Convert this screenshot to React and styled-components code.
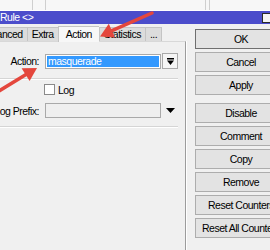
import React from 'react';
import styled, { createGlobalStyle } from 'styled-components';

const uiFont = '"Liberation Sans", Arial, sans-serif';

const GlobalStyle = createGlobalStyle`
  html, body { margin: 0; padding: 0; background: #f0f0f0; }
  body { font-family: ${uiFont}; font-size: 10.5px; letter-spacing: -0.5px; color: #000; }
`;

const Frame = styled.div`
  position: relative;
  width: 270px;
  height: 250px;
  overflow: hidden;
  display: flex;
  flex-direction: column;
  background: #f0f0f0;
`;

// the list window behind the dialog
const HeaderStrip = styled.div`
  display: flex;
  height: 10px;
  background: #f7f7f7;
  border-bottom: 1px solid #fff;
  flex-shrink: 0;
`;
const HeaderCell = styled.div`
  width: ${p => p.w}px;
  flex-shrink: 0;
  border-right: 1px solid #cfcfcf;
`;

const TitleBar = styled.div`
  display: flex;
  align-items: center;
  justify-content: space-between;
  height: 13px;
  background: #4b4dcb;
  color: #fff;
  line-height: 13px;
  flex-shrink: 0;
`;
const MaxBox = styled.div`
  width: 10px;
  height: 8px;
  margin-right: -4px;
  border: 1px solid #2a2a2a;
  background: #f4f4f4;
`;

const Body = styled.div`
  display: flex;
  align-items: stretch;
  flex: 1;
`;

const LeftPane = styled.div`
  width: 186px;
  flex-shrink: 0;
  display: flex;
  flex-direction: column;
  padding-top: 2px;
`;

const TabRow = styled.div`
  display: flex;
  align-items: flex-end;
  height: 15px;
`;
const Tab = styled.div`
  height: ${p => (p.active ? 15 : 13)}px;
  line-height: ${p => (p.active ? 15 : 13)}px;
  padding: 0 ${p => (p.active ? 7 : 4)}px;
  margin-left: ${p => p.offset || 0}px;
  margin-bottom: ${p => (p.active ? -1 : 0)}px;
  background: ${p => (p.active ? '#f7f7f7' : '#dcdcdc')};
  border: 1px solid #c4c4c4;
  border-bottom: none;
  border-right: none;
  white-space: nowrap;
  position: relative;
  z-index: ${p => (p.active ? 1 : 0)};
  &:last-child { border-right: 1px solid #c4c4c4; }
`;

const Panel = styled.div`
  flex: 1;
  display: flex;
  flex-direction: column;
  padding: 11px 7px 0 0;
  border-top: 1px solid #d8d8d8;
  border-right: 1px solid #9c9c9c;
  box-shadow: 1px 0 0 #fff;
`;

const FieldRow = styled.div`
  display: flex;
  align-items: center;
  gap: 6px;
  height: ${p => p.h}px;
  margin-top: ${p => p.top || 0}px;
`;
const Label = styled.div`
  width: 39px;
  flex-shrink: 0;
  display: flex;
  justify-content: flex-end;
  white-space: nowrap;
`;

const SelectBox = styled.div`
  width: 116px;
  height: 15px;
  box-sizing: border-box;
  border: 1px solid #a9a9a9;
  background: ${p => (p.disabled ? '#efefef' : '#fff')};
  display: flex;
  align-items: center;
  padding: 0 1px;
`;
const Selected = styled.span`
  flex: 1;
  height: 11px;
  line-height: 11px;
  background: #3399ff;
  color: #fff;
  padding-left: 1px;
`;
const DropButton = styled.div`
  width: 16px;
  height: 16px;
  box-sizing: border-box;
  margin-left: -5px;
  border: 1px solid #a9a9a9;
  background: #f5f5f5;
  display: flex;
  align-items: center;
  justify-content: center;
`;
const DropArrow = styled.div`
  margin-left: -1px;
  display: flex;
  align-items: center;
`;

const CheckBox = styled.div`
  width: 11px;
  height: 11px;
  box-sizing: border-box;
  border: 1px solid #8a8a8a;
  background: #fff;
  margin-left: -1px;
`;
const CheckLabel = styled.span`
  margin-left: -3px;
`;

const Separator = styled.div`
  height: 0;
  border-top: 1px solid #d5d5d5;
  border-bottom: 1px solid #fff;
  margin-top: ${p => p.top}px;
`;

const ButtonColumn = styled.div`
  margin-left: 9px;
  width: 92px;
  flex-shrink: 0;
  display: flex;
  flex-direction: column;
  gap: 3px;
  padding-top: 5px;
`;
const Button = styled.div`
  height: 20px;
  box-sizing: border-box;
  border: 1px solid ${p => (p.primary ? '#6f6f6f' : '#adadad')};
  background: #e3e3e3;
  display: flex;
  align-items: center;
  justify-content: center;
  white-space: nowrap;
  margin-top: ${p => (p.spaced ? 5 : 0)}px;
`;

const Overlay = styled.svg`
  position: absolute;
  left: 0;
  top: 0;
  pointer-events: none;
`;

const StackedArrow = () => (
  <svg width="9" height="9" viewBox="0 0 9 9">
    <rect x="1" y="1" width="7" height="1.5" fill="#000" />
    <path d="M1 3.5 H8 L4.5 8 Z" fill="#000" />
  </svg>
);

const TriangleDown = () => (
  <svg width="9" height="5" viewBox="0 0 9 5">
    <path d="M0 0 H9 L4.5 5 Z" fill="#000" />
  </svg>
);

const buttons = [
  { label: 'OK', primary: true },
  { label: 'Cancel' },
  { label: 'Apply' },
  { label: 'Disable', spaced: true },
  { label: 'Comment' },
  { label: 'Copy' },
  { label: 'Remove' },
  { label: 'Reset Counters' },
  { label: 'Reset All Counters' },
];

const App = () => (
  <Frame>
    <GlobalStyle />
    <HeaderStrip>
      <HeaderCell w={32} />
      <HeaderCell w={12} />
      <HeaderCell w={159} />
      <HeaderCell w={3} />
    </HeaderStrip>

    <TitleBar>
      <span>Rule &lt;&gt;</span>
      <MaxBox />
    </TitleBar>

    <Body>
      <LeftPane>
        <TabRow>
          <Tab offset={-25}>Advanced</Tab>
          <Tab>Extra</Tab>
          <Tab active>Action</Tab>
          <Tab>Statistics</Tab>
          <Tab>...</Tab>
        </TabRow>
        <Panel>
          <FieldRow h={16}>
            <Label>Action:</Label>
            <SelectBox>
              <Selected>masquerade</Selected>
            </SelectBox>
            <DropButton><StackedArrow /></DropButton>
          </FieldRow>
          <Separator top={9} />
          <FieldRow h={11} top={4}>
            <Label />
            <CheckBox />
            <CheckLabel>Log</CheckLabel>
          </FieldRow>
          <FieldRow h={15} top={8}>
            <Label>Log Prefix:</Label>
            <SelectBox disabled />
            <DropArrow><TriangleDown /></DropArrow>
          </FieldRow>
          <Separator top={8} />
        </Panel>
      </LeftPane>

      <ButtonColumn>
        {buttons.map(b => (
          <Button key={b.label} primary={b.primary} spaced={b.spaced}>{b.label}</Button>
        ))}
      </ButtonColumn>
    </Body>

    <Overlay width="270" height="250" viewBox="0 0 270 250">
      <g stroke="#e4473d" strokeWidth="3.5" strokeLinecap="round" fill="#e4473d">
        <line x1="152" y1="13" x2="112" y2="30.7" />
        <line x1="-6" y1="94" x2="26" y2="74.6" />
      </g>
      <path d="M100 36.5 L115 37.4 L108.8 23.8 Z" fill="#e4473d" />
      <path d="M37 68 L29.6 81 L21.6 68.2 Z" fill="#e4473d" />
    </Overlay>
  </Frame>
);

export default App;
